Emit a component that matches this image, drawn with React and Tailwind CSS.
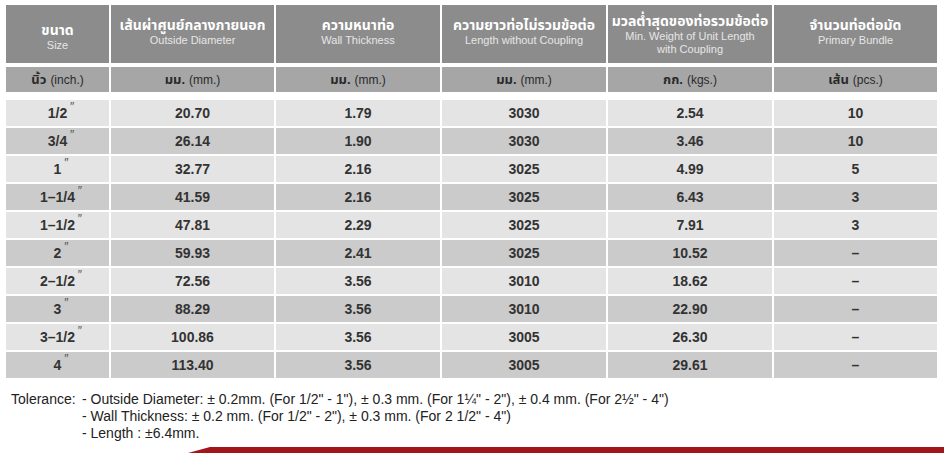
import React from "react";

const cols = [
  { w: "w-[103px]" },
  { w: "w-[163px]" },
  { w: "w-[164px]" },
  { w: "w-[164px]" },
  { w: "w-[164px]" },
  { w: "w-[163px]" },
];

const headers = [
  { th: "ขนาด", en: ["Size"], extra: "pt-[6px]" },
  { th: "เส้นผ่าศูนย์กลางภายนอก", en: ["Outside Diameter"], extra: "pb-[4px]" },
  { th: "ความหนาท่อ", en: ["Wall Thickness"], extra: "pb-[4px]" },
  { th: "ความยาวท่อไม่รวมข้อต่อ", en: ["Length without Coupling"], extra: "pb-[4px]" },
  { th: "มวลต่ำสุดของท่อรวมข้อต่อ", en: ["Min. Weight of Unit Length", "with Coupling"], extra: "" },
  { th: "จำนวนท่อต่อมัด", en: ["Primary Bundle"], extra: "pb-[4px]" },
];

const units = [
  ["นิ้ว", "(inch.)"],
  ["มม.", "(mm.)"],
  ["มม.", "(mm.)"],
  ["มม.", "(mm.)"],
  ["กก.", "(kgs.)"],
  ["เส้น", "(pcs.)"],
];

const rows = [
  ["1/2", "20.70", "1.79", "3030", "2.54", "10"],
  ["3/4", "26.14", "1.90", "3030", "3.46", "10"],
  ["1", "32.77", "2.16", "3025", "4.99", "5"],
  ["1–1/4", "41.59", "2.16", "3025", "6.43", "3"],
  ["1–1/2", "47.81", "2.29", "3025", "7.91", "3"],
  ["2", "59.93", "2.41", "3025", "10.52", "–"],
  ["2–1/2", "72.56", "3.56", "3010", "18.62", "–"],
  ["3", "88.29", "3.56", "3010", "22.90", "–"],
  ["3–1/2", "100.86", "3.56", "3005", "26.30", "–"],
  ["4", "113.40", "3.56", "3005", "29.61", "–"],
];

const font = { fontFamily: '"Liberation Sans", "Noto Sans Thai", "Noto Sans", sans-serif' };

export default function App() {
  return (
    <div className="w-[944px] h-[453px] bg-white relative overflow-hidden" style={font}>
      <div className="pt-[5px] pl-[6px] flex flex-col">
        {/* header */}
        <div className="flex gap-[2px] h-[58px]">
          {headers.map((h, i) => (
            <div
              key={i}
              className={`${cols[i].w} bg-[#8c8c8c] flex flex-col items-center justify-center text-center ${h.extra}`}
            >
              <div className="text-white font-bold text-[14px] leading-[17px]">{h.th}</div>
              {h.en.map((e, j) => (
                <div key={j} className="text-[#e6e6e6] text-[11px] leading-[13px]">{e}</div>
              ))}
            </div>
          ))}
        </div>
        {/* unit row */}
        <div className="flex gap-[2px] h-[25px] mt-[4px]">
          {units.map((u, i) => (
            <div key={i} className={`${cols[i].w} bg-[#a6a6a6] flex items-center justify-center text-[#2a2a2a] text-[12px]`}>
              <span className="font-bold text-[13px]">{u[0]}</span>
              <span className="ml-[4px]">{u[1]}</span>
            </div>
          ))}
        </div>
        {/* data rows */}
        <div className="flex flex-col gap-[2px] mt-[8px]">
          {rows.map((r, ri) => (
            <div key={ri} className="flex gap-[2px] h-[26px]">
              {r.map((c, ci) => (
                <div
                  key={ci}
                  className={`${cols[ci].w} ${ri % 2 === 0 ? "bg-[#e4e4e4]" : "bg-[#cbcbcb]"} flex items-center justify-center font-bold text-[14px] text-[#333333]`}
                >
                  {ci === 0 ? (
                    <span className="relative">
                      {c}
                      <span className="absolute -right-[7px] -top-[5px] text-[12px] font-normal text-[#555555]">″</span>
                    </span>
                  ) : (
                    c
                  )}
                </div>
              ))}
            </div>
          ))}
        </div>
      </div>
      {/* tolerance */}
      <div className="pl-[11px] mt-[13px] text-[14px] leading-[17px] text-[#222222] flex">
        <div className="w-[71px]">Tolerance:</div>
        <div className="flex flex-col">
          <div>- Outside Diameter: ± 0.2mm. (For 1/2" - 1"), ± 0.3 mm. (For 1¼" - 2"), ± 0.4 mm. (For 2½" - 4")</div>
          <div>- Wall Thickness: ± 0.2 mm. (For 1/2" - 2"), ± 0.3 mm. (For 2 1/2" - 4")</div>
          <div>- Length : ±6.4mm.</div>
        </div>
      </div>
      <div className="absolute left-[188px] right-0 bottom-0 h-[6px] bg-[#a0161b] [clip-path:polygon(22px_0,100%_0,100%_100%,0_100%)]"></div>
    </div>
  );
}
